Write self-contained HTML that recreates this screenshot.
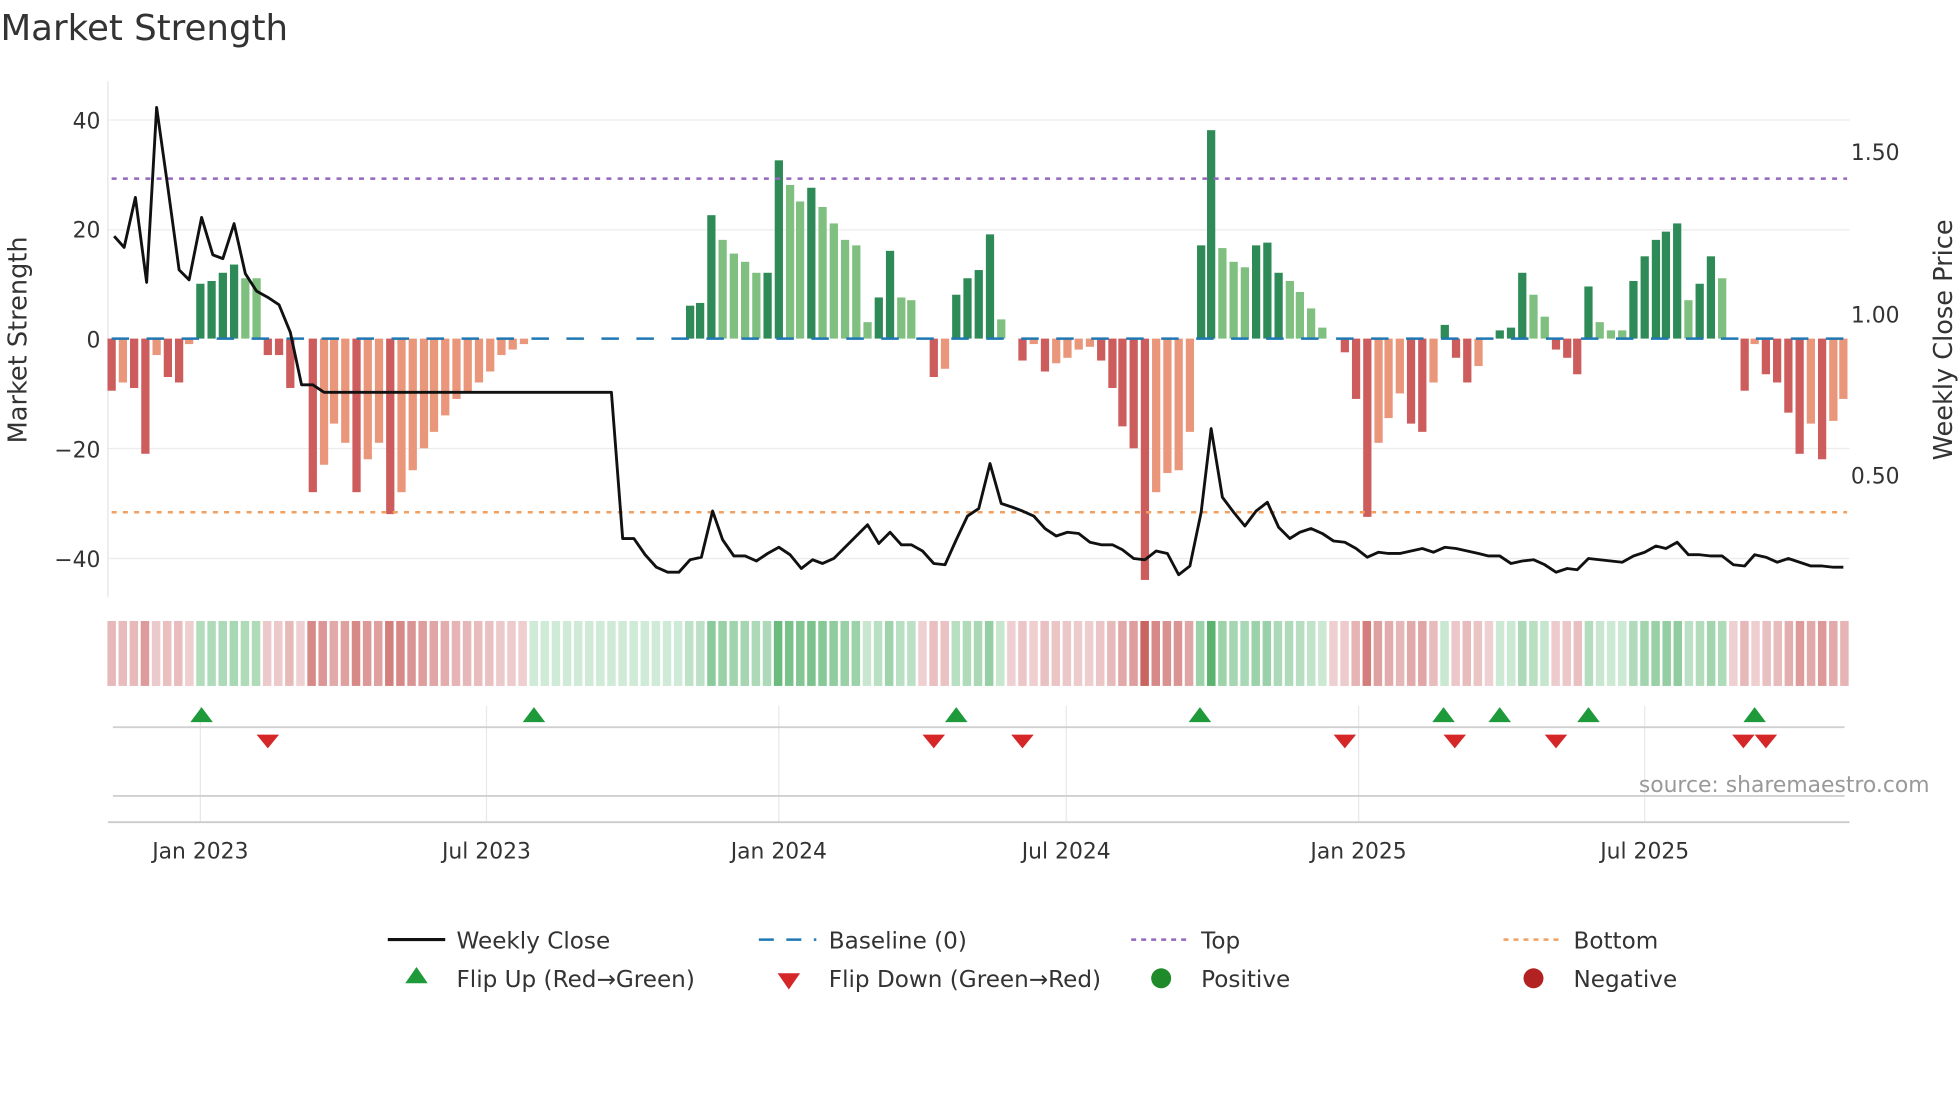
<!DOCTYPE html>
<html><head><meta charset="utf-8"><style>
html,body{margin:0;padding:0;background:#fff;}
svg{display:block;font-family:"DejaVu Sans","Liberation Sans",sans-serif;}
</style></head><body>
<svg id="c" width="1960" height="1102" viewBox="0 0 1568 882" xmlns="http://www.w3.org/2000/svg">
<rect width="1568" height="882" fill="#fff"/>
<text x="0" y="32" font-size="28.5" fill="#333">Market Strength</text>
<g stroke="#ececec" stroke-width="1">
<line x1="86" x2="1480" y1="96" y2="96"/><line x1="86" x2="1480" y1="184" y2="184"/>
<line x1="86" x2="1480" y1="359" y2="359"/><line x1="86" x2="1480" y1="447" y2="447"/>
</g>
<line x1="86" x2="86" y1="65" y2="478" stroke="#e4e4e4"/>
<g font-size="17.5" fill="#333" text-anchor="end">
<text x="80" y="103">40</text><text x="80" y="190">20</text><text x="80" y="278">0</text>
<text x="80" y="366">−20</text><text x="80" y="454">−40</text>
</g>
<g font-size="17.5" fill="#333">
<text x="1481" y="128">1.50</text><text x="1481" y="258">1.00</text><text x="1481" y="387">0.50</text>
</g>
<text transform="translate(21,272) rotate(-90)" font-size="20.5" fill="#333" text-anchor="middle">Market Strength</text>
<text transform="translate(1562,272) rotate(-90)" font-size="20.5" fill="#333" text-anchor="middle">Weekly Close Price</text>
<g id="bars"></g>
<line x1="89" x2="1478" y1="271" y2="271" stroke="#1f77b4" stroke-width="2" stroke-dasharray="14,14"/>
<line x1="89" x2="1478" y1="143" y2="143" stroke="#9467bd" stroke-width="2" stroke-dasharray="4,5"/>
<line x1="89" x2="1478" y1="410" y2="410" stroke="#f0a060" stroke-width="2" stroke-dasharray="4,5"/>
<polyline id="price" fill="none" stroke="#111" stroke-width="2.3" stroke-linejoin="round"/>
<g id="heat"></g>
<g stroke="#e8e8e8"><line x1="160" x2="160" y1="565" y2="658"/><line x1="389" x2="389" y1="565" y2="658"/><line x1="623" x2="623" y1="565" y2="658"/><line x1="853" x2="853" y1="565" y2="658"/><line x1="1087" x2="1087" y1="565" y2="658"/><line x1="1316" x2="1316" y1="565" y2="658"/></g>
<line x1="90" x2="1476" y1="582" y2="582" stroke="#d0d0d0" stroke-width="1.5"/>
<line x1="90" x2="1476" y1="637" y2="637" stroke="#d0d0d0" stroke-width="1.5"/>
<line x1="86" x2="1480" y1="658" y2="658" stroke="#ccc" stroke-width="1.5"/>
<g id="marks"></g>
<text x="1544" y="634" font-size="17.5" fill="#999" text-anchor="end">source: sharemaestro.com</text>
<g font-size="17.5" fill="#333" text-anchor="middle">
<text x="160" y="687">Jan 2023</text><text x="389" y="687">Jul 2023</text><text x="623" y="687">Jan 2024</text>
<text x="853" y="687">Jul 2024</text><text x="1087" y="687">Jan 2025</text><text x="1316" y="687">Jul 2025</text>
</g>
<g font-size="18.5" fill="#333">
<line x1="310" x2="356" y1="752" y2="752" stroke="#111" stroke-width="2.5"/><text x="365" y="759">Weekly Close</text>
<line x1="607" x2="653" y1="752" y2="752" stroke="#1f77b4" stroke-width="2" stroke-dasharray="12,10"/><text x="663" y="759">Baseline (0)</text>
<line x1="905" x2="951" y1="752" y2="752" stroke="#9467bd" stroke-width="2" stroke-dasharray="4,4"/><text x="961" y="759">Top</text>
<line x1="1203" x2="1249" y1="752" y2="752" stroke="#f0a060" stroke-width="2" stroke-dasharray="4,4"/><text x="1259" y="759">Bottom</text>
<polygon points="333,774 342,787 324,787" fill="#1e9a3a"/><text x="365" y="790">Flip Up (Red→Green)</text>
<polygon points="622,779 640,779 631,792" fill="#d62728"/><text x="663" y="790">Flip Down (Green→Red)</text>
<circle cx="929" cy="783" r="8" fill="#1e8a2a"/><text x="961" y="790">Positive</text>
<circle cx="1227" cy="783" r="8" fill="#b22222"/><text x="1259" y="790">Negative</text>
</g>
<script>
var NS="http://www.w3.org/2000/svg";
function el(parent,tag,attrs){var e=document.createElementNS(NS,tag);for(var k in attrs)e.setAttribute(k,attrs[k]);document.getElementById(parent).appendChild(e);}
var B=[[89,-9.5,1],[98,-8,0],[107,-9,1],[116,-21,1],[125,-3,0],[134,-7,1],[143,-8,1],[151,-1,0],[160,10,1],[169,10.5,1],[178,12,1],[187,13.5,1],[196,11,0],[205,11,0],[214,-3,1],[223,-3,1],[232,-9,1],[250,-28,1],[259,-23,0],[267,-15.5,0],[276,-19,0],[285,-28,1],[294,-22,0],[303,-19,0],[312,-32,1],[321,-28,0],[330,-24,0],[339,-20,0],[347,-17,0],[356,-14,0],[365,-11,0],[374,-10,0],[383,-8,0],[392,-6,0],[401,-3,0],[410,-2,0],[419,-1,0],
[552,6,1],[560,6.5,1],[569,22.5,1],[578,18,0],[587,15.5,0],[596,14,0],[605,12,0],[614,12,1],[623,32.5,1],[632,28,0],[640,25,0],[649,27.5,1],[658,24,0],[667,21,0],[676,18,0],[685,17,0],[694,3,0],[703,7.5,1],[712,16,1],[721,7.5,0],[729,7,0],[747,-7,1],[756,-5.5,0],[765,8,1],[774,11,1],[783,12.5,1],[792,19,1],[801,3.5,0],[818,-4,1],[827,-1,0],[836,-6,1],[845,-4.5,0],[854,-3.5,0],[863,-2,0],[872,-1.5,0],[881,-4,1],[890,-9,1],[898,-16,1],[907,-20,1],[916,-44,1],[925,-28,0],[934,-24.5,0],[943,-24,0],[952,-17,0],[961,17,1],[969,38,1],[978,16.5,0],[987,14,0],[996,13,0],[1005,17,1],[1014,17.5,1],[1023,12,1],[1032,10.5,0],[1040,8.5,0],[1049,5.5,0],[1058,2,0],[1076,-2.5,1],[1085,-11,1],[1094,-32.5,1],[1103,-19,0],[1111,-14.5,0],[1120,-10,0],[1129,-15.5,1],[1138,-17,1],[1147,-8,0],[1156,2.5,1],[1165,-3.5,1],[1174,-8,1],[1183,-5,0],[1200,1.5,1],[1209,2,1],[1218,12,1],[1227,8,0],[1236,4,0],[1245,-2,1],[1254,-3.5,1],[1262,-6.5,1],[1271,9.5,1],[1280,3,0],[1289,1.5,0],[1298,1.5,0],[1307,10.5,1],[1316,15,1],[1325,18,1],[1333,19.5,1],[1342,21,1],[1351,7,0],[1360,10,1],[1369,15,1],[1378,11,0],[1396,-9.5,1],[1404,-1,0],[1413,-6.5,1],[1422,-8,1],[1431,-13.5,1],[1440,-21,1],[1449,-15.5,0],[1458,-22,1],[1467,-15,0],[1475,-11,0]];
var vals={};
B.forEach(function(b){var y=271-b[1]*4.39,h=Math.abs(b[1]*4.39);var c=b[1]>0?(b[2]?'#2e8b57':'#7fbf7f'):(b[2]?'#cd5c5c':'#e9967a');
el('bars','rect',{x:b[0]-3.3,y:Math.min(y,271),width:6.6,height:h,fill:c});vals[Math.round((b[0]-89)/8.89)]=b[1];});
function mix(a,b,t){return 'rgb('+[0,1,2].map(function(i){return Math.round(a[i]+(b[i]-a[i])*t)}).join(',')+')';}
for(var i=0;i<157;i++){var x=89+i*8.89;var v=vals[i];var gz=(x>425&&x<550);if(v===undefined)v=gz?0.5:0;
var t=Math.min(1,0.05+Math.abs(v)/45);var c;
if(v>0)c=mix([216,238,222],[76,172,98],t);else c=mix([241,214,216],[202,100,97],t);
el('heat','rect',{x:x-3.4,y:497,width:6.8,height:52,fill:c});}
document.getElementById('price').setAttribute('points',"91,189 99,198 108,158 117,226 125,86 134,150 143,216 151,224 161,174 170,204 178,207 187,179 196,219 205,233 214,238 223,244 232,266 241,308 250,308 259,314 489,314 498,431 507,431 516,444 525,454 534,458 543,458 552,448 561,446 570,409 578,432 587,445 596,445 605,449 614,443 623,438 632,444 641,455 650,448 658,451 667,447 676,438 685,429 694,420 703,435 712,426 721,436 729,436 738,441 747,451 756,452 765,432 774,413 783,407 792,371 801,403 810,406 818,409 827,413 836,423 845,429 854,426 863,427 872,434 881,436 890,436 898,440 907,447 916,448 925,441 934,443 943,460 952,453 961,410 969,343 978,398 987,410 996,421 1005,409 1014,402 1023,422 1032,431 1040,426 1049,423 1058,427 1067,433 1076,434 1085,439 1094,446 1103,442 1111,443 1120,443 1129,441 1138,439 1147,442 1156,438 1165,439 1174,441 1183,443 1191,445 1200,445 1209,451 1218,449 1227,448 1236,452 1245,458 1254,455 1262,456 1271,447 1280,448 1289,449 1298,450 1307,445 1316,442 1325,437 1333,439 1342,434 1351,444 1360,444 1369,445 1378,445 1387,452 1396,453 1404,444 1413,446 1422,450 1431,447 1440,450 1449,453 1458,453 1467,454 1475,454");
[161,427,765,960,1155,1200,1271,1404].forEach(function(x){el('marks','polygon',{points:x+',566 '+(x+9)+',578 '+(x-9)+',578',fill:'#1e9a3a'});});
[214,747,818,1076,1164,1245,1395,1413].forEach(function(x){el('marks','polygon',{points:(x-9)+',588 '+(x+9)+',588 '+x+',599',fill:'#d62728'});});
</script>
</svg>
</body></html>
